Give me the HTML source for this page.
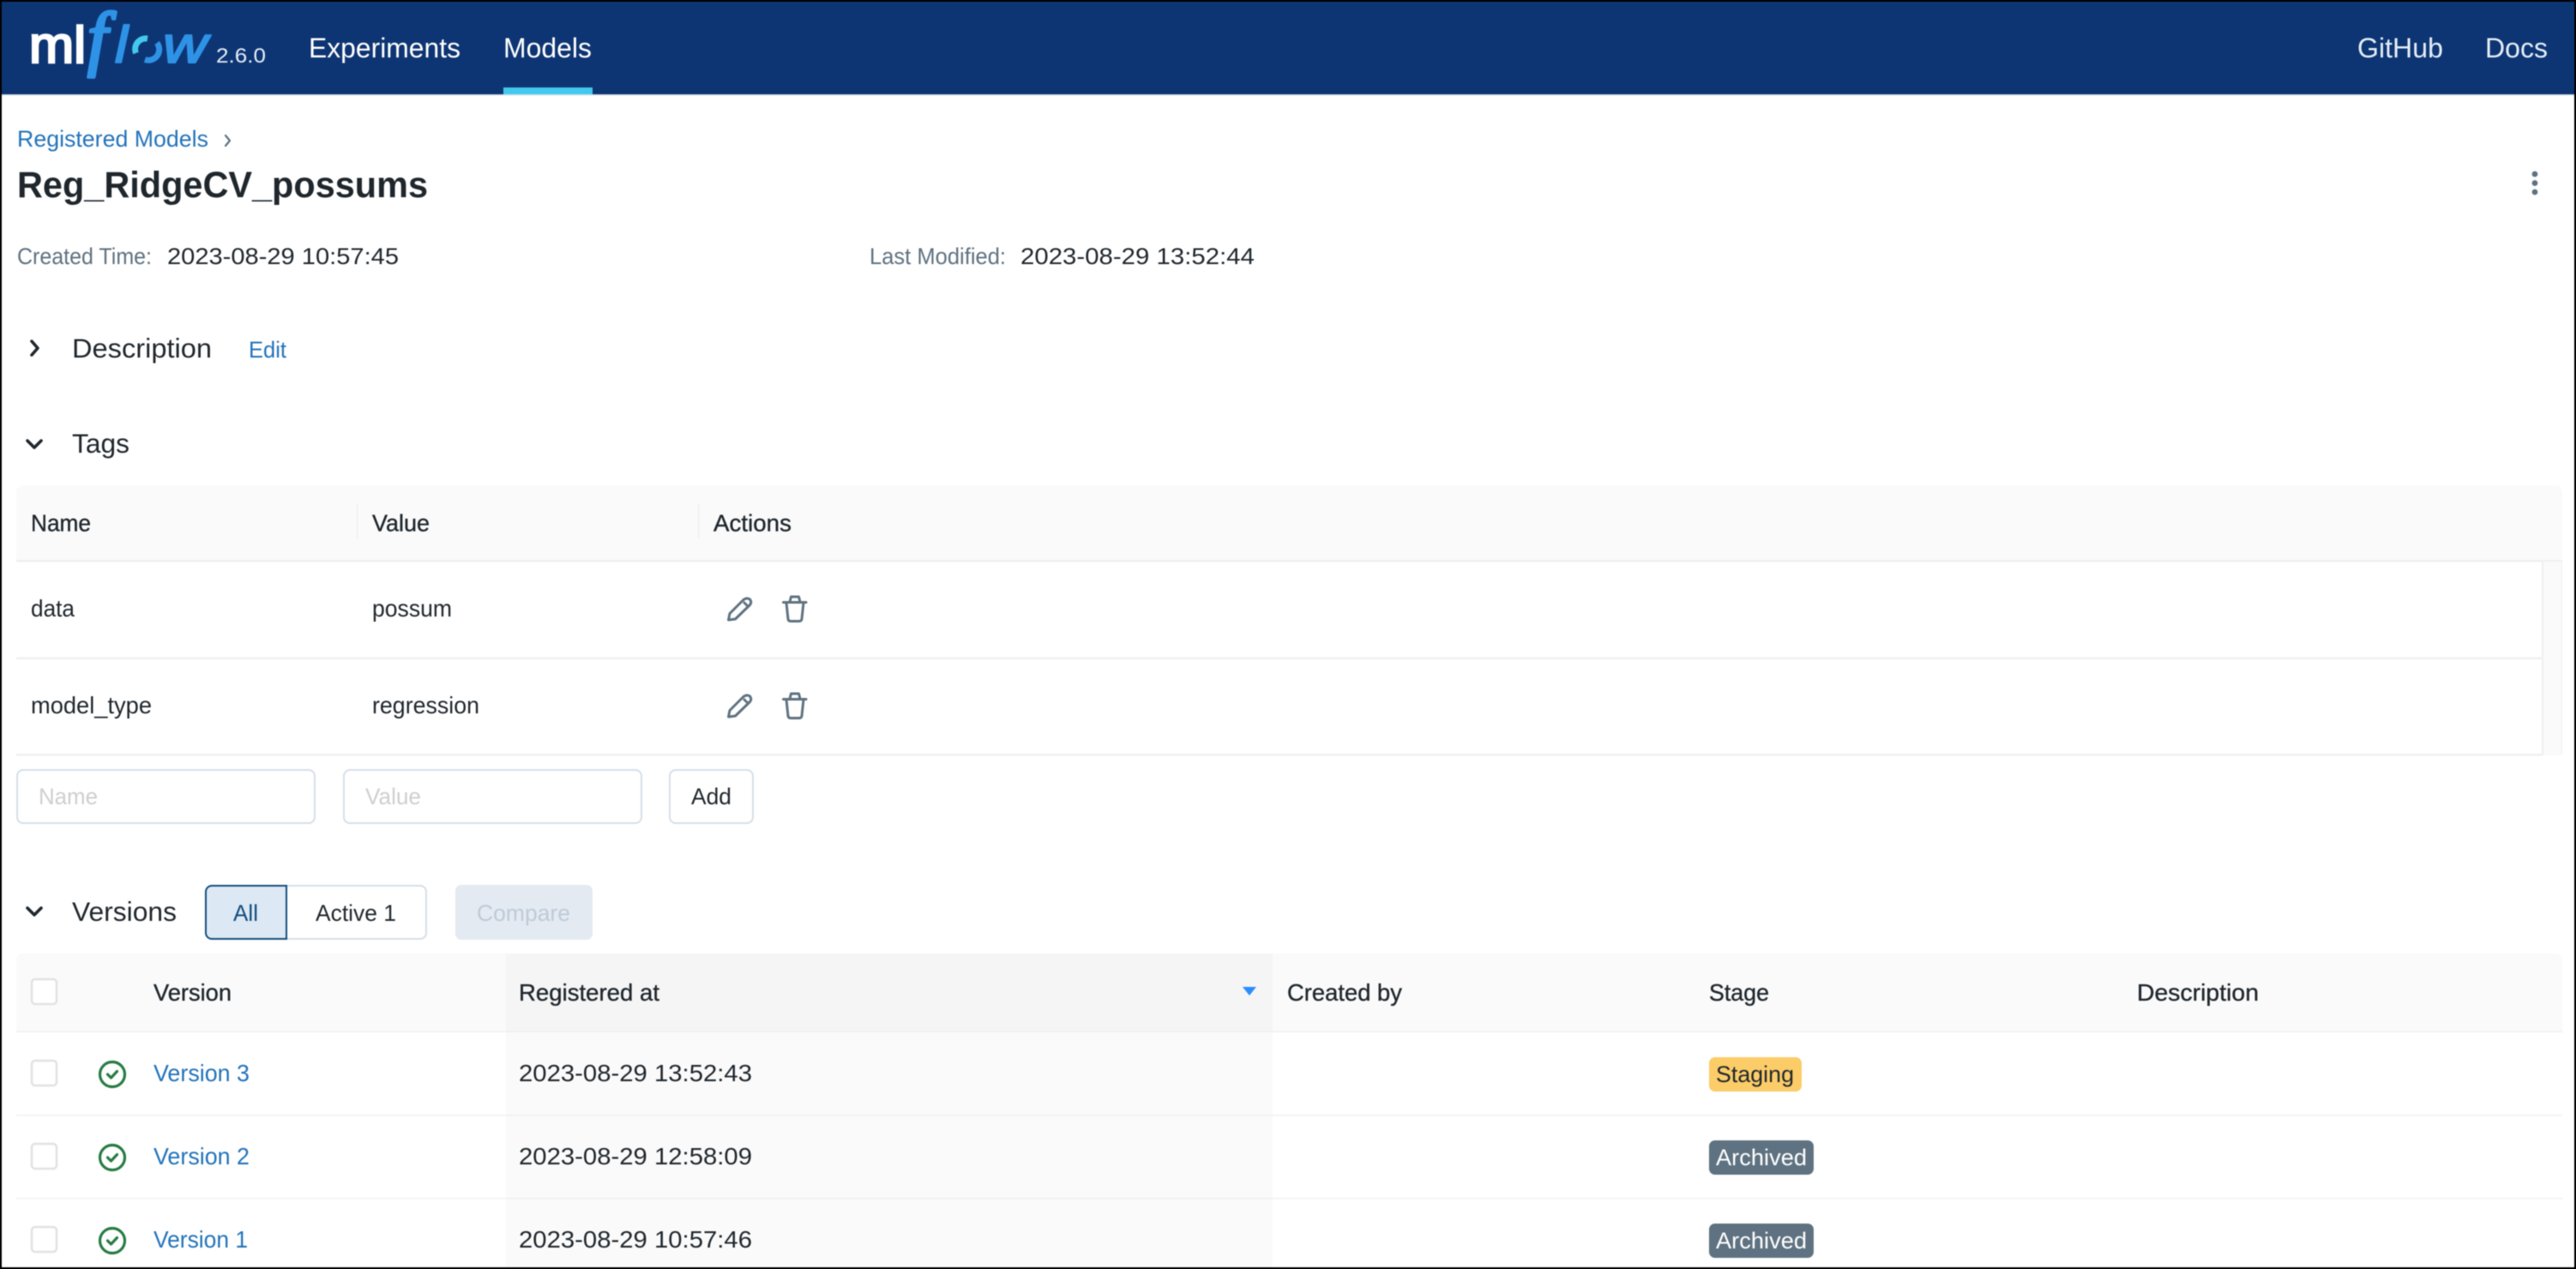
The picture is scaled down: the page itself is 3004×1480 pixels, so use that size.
<!DOCTYPE html>
<html lang="en">
<head>
<meta charset="utf-8">
<title>Reg_RidgeCV_possums - MLflow Model</title>
<style>
html,body{margin:0;padding:0;background:#000;width:3004px;height:1480px;overflow:hidden}
svg{display:block;filter:blur(.6px)}
text{font-family:"Liberation Sans",Arial,sans-serif;font-size:28px;fill:#1F272D}
.nav{font-size:32px;fill:#fff}
.navr{font-size:32px;fill:#E4EDF7}
.small{font-size:26.5px}
.gray{fill:#5F7281}
.link{fill:#2374BB}
.h{font-size:31.5px}
.th{font-size:27.5px;stroke:#1F272D;stroke-width:.35px}
.ph{fill:#CFCFCF;font-size:27px}
.ic{fill:none;stroke:#5F7281;stroke-width:3;stroke-linecap:round;stroke-linejoin:round}
.chev{fill:none;stroke:#1F272D;stroke-width:3.6;stroke-linecap:round;stroke-linejoin:round}
.cb{fill:#fff;stroke:#E2E2E2;stroke-width:2.5}
.ok{fill:none;stroke:#277C43;stroke-width:3.2;stroke-linecap:round;stroke-linejoin:round}
.logo-b{font-style:italic;fill:#2E93E6;stroke:#2E93E6;stroke-linejoin:round}
</style>
</head>
<body>
<svg xmlns="http://www.w3.org/2000/svg" width="3004" height="1480" viewBox="0 0 3004 1480">
  <!-- page -->
  <rect x="2" y="2" width="3000" height="1476" fill="#fff"/>

  <!-- header -->
  <rect x="2" y="2" width="3000" height="108" fill="#0E3573"/>
  <rect x="2" y="110" width="3000" height="1.5" fill="#D9E2EC"/>
  <text x="34" y="73" style="font-size:60px;fill:#fff;stroke:#fff;stroke-width:2.6" textLength="66" lengthAdjust="spacingAndGlyphs">ml</text>
  <text class="logo-b" x="102" y="72" style="font-family:'Liberation Serif',serif;font-size:84px;stroke-width:3.6">f</text>
  <text class="logo-b" x="134" y="73" style="font-size:60px;stroke-width:2" textLength="15" lengthAdjust="spacingAndGlyphs">l</text>
  <g fill="none" stroke-width="7">
    <path d="M158.5 62 A12.5 12.5 0 0 1 172 45" stroke="#43C9ED"/>
    <path d="M183 50 A12.5 12.5 0 0 1 169 69.5" stroke="#2E93E6"/>
  </g>
  <text class="logo-b" x="190" y="73" style="font-size:60px;stroke-width:2" textLength="52" lengthAdjust="spacingAndGlyphs">w</text>
  <text x="252" y="73" style="font-size:24.5px;fill:#E4EDF7" textLength="58" lengthAdjust="spacingAndGlyphs">2.6.0</text>
  <text class="nav" x="360" y="67" textLength="177" lengthAdjust="spacingAndGlyphs">Experiments</text>
  <text class="nav" x="587" y="67" textLength="103" lengthAdjust="spacingAndGlyphs">Models</text>
  <rect x="587" y="102" width="104" height="8" fill="#43C9ED"/>
  <text class="navr" x="2749" y="67" textLength="100" lengthAdjust="spacingAndGlyphs">GitHub</text>
  <text class="navr" x="2898" y="67" textLength="73" lengthAdjust="spacingAndGlyphs">Docs</text>

  <!-- breadcrumb + title -->
  <text class="small link" x="20" y="171" textLength="223" lengthAdjust="spacingAndGlyphs">Registered Models</text>
  <path d="M263 158 L268 164 L263 170" fill="none" stroke="#5F7281" stroke-width="2.2" stroke-linecap="round" stroke-linejoin="round"/>
  <text x="20" y="230" style="font-size:43px;font-weight:bold" textLength="479" lengthAdjust="spacingAndGlyphs">Reg_RidgeCV_possums</text>
  <circle cx="2956" cy="203" r="3.4" fill="#5F7281"/>
  <circle cx="2956" cy="213.5" r="3.4" fill="#5F7281"/>
  <circle cx="2956" cy="224" r="3.4" fill="#5F7281"/>

  <text class="small gray" x="20" y="308" textLength="157" lengthAdjust="spacingAndGlyphs">Created Time:</text>
  <text class="small" x="195" y="308" textLength="270" lengthAdjust="spacingAndGlyphs">2023-08-29 10:57:45</text>
  <text class="small gray" x="1014" y="308" textLength="159" lengthAdjust="spacingAndGlyphs">Last Modified:</text>
  <text class="small" x="1190" y="308" textLength="273" lengthAdjust="spacingAndGlyphs">2023-08-29 13:52:44</text>

  <!-- description -->
  <path class="chev" d="M37 398 L44 406 L37 414"/>
  <text class="h" x="84" y="417" textLength="163" lengthAdjust="spacingAndGlyphs">Description</text>
  <text class="small link" x="290" y="417" textLength="44" lengthAdjust="spacingAndGlyphs">Edit</text>

  <!-- tags -->
  <path class="chev" d="M32 514 L40 522 L48 514"/>
  <text class="h" x="84" y="528" textLength="67" lengthAdjust="spacingAndGlyphs">Tags</text>

  <path d="M27 566 H2980 a8 8 0 0 1 8 8 V653 H19 V574 a8 8 0 0 1 8 -8 Z" fill="#FAFAFA"/>
  <rect x="19" y="653" width="2969" height="2.5" fill="#F0F0F0"/>
  <rect x="416" y="588" width="1.5" height="40" fill="#F0F0F0"/>
  <rect x="814" y="588" width="1.5" height="40" fill="#F0F0F0"/>
  <text class="th" x="36" y="619.5" textLength="70" lengthAdjust="spacingAndGlyphs">Name</text>
  <text class="th" x="434" y="619.5" textLength="67" lengthAdjust="spacingAndGlyphs">Value</text>
  <text class="th" x="832" y="619.5" textLength="91" lengthAdjust="spacingAndGlyphs">Actions</text>

  <rect x="2965" y="655" width="23" height="226" fill="#FAFAFA"/>
  <rect x="2964" y="655" width="1.8" height="226" fill="#EFEFEF"/>
  <rect x="2987" y="655" width="1" height="226" fill="#F2F2F2"/>
  <rect x="19" y="766.5" width="2946" height="2.5" fill="#F0F0F0"/>
  <rect x="19" y="879" width="2946" height="2.5" fill="#F0F0F0"/>

  <text x="36" y="719" textLength="51" lengthAdjust="spacingAndGlyphs">data</text>
  <text x="434" y="719" textLength="93" lengthAdjust="spacingAndGlyphs">possum</text>
  <text x="36" y="832" textLength="141" lengthAdjust="spacingAndGlyphs">model_type</text>
  <text x="434" y="832" textLength="125" lengthAdjust="spacingAndGlyphs">regression</text>

  <!-- row icons -->
  <g>
    <path class="ic" d="M849.5 723 L851 715.5 L867 699.5 Q871 696.5 874.5 699 Q877 702.5 874.5 705.5 L857.5 722 Z"/>
    <path class="ic" d="M868 703 L871.5 706.5" stroke-width="2.2"/>
    <path class="ic" d="M913.5 702.5 H940 M917 703 L919 722 Q919.4 724.5 922 724.5 H932 Q934.5 724.5 935 722 L937 703 M921 702 L922.5 696 H931.5 L933 702"/>
  </g>
  <g transform="translate(0,113)">
    <path class="ic" d="M849.5 723 L851 715.5 L867 699.5 Q871 696.5 874.5 699 Q877 702.5 874.5 705.5 L857.5 722 Z"/>
    <path class="ic" d="M868 703 L871.5 706.5" stroke-width="2.2"/>
    <path class="ic" d="M913.5 702.5 H940 M917 703 L919 722 Q919.4 724.5 922 724.5 H932 Q934.5 724.5 935 722 L937 703 M921 702 L922.5 696 H931.5 L933 702"/>
  </g>

  <!-- add tag form -->
  <rect x="20" y="898" width="347" height="62" rx="7" fill="#fff" stroke="#D5DFE8" stroke-width="2"/>
  <rect x="401" y="898" width="347" height="62" rx="7" fill="#fff" stroke="#D5DFE8" stroke-width="2"/>
  <rect x="781" y="898" width="97" height="62" rx="7" fill="#fff" stroke="#D5DFE8" stroke-width="2"/>
  <text class="ph" x="45" y="938" textLength="69" lengthAdjust="spacingAndGlyphs">Name</text>
  <text class="ph" x="426" y="938" textLength="65" lengthAdjust="spacingAndGlyphs">Value</text>
  <text class="small" x="806" y="938" textLength="47" lengthAdjust="spacingAndGlyphs">Add</text>

  <!-- versions -->
  <path class="chev" d="M32 1059 L40 1067 L48 1059"/>
  <text class="h" x="84" y="1074" textLength="122" lengthAdjust="spacingAndGlyphs">Versions</text>
  <path d="M334 1033 H490 a7 7 0 0 1 7 7 V1088 a7 7 0 0 1 -7 7 H334 Z" fill="#fff" stroke="#D5DFE8" stroke-width="2"/>
  <path d="M334 1033 H247 a7 7 0 0 0 -7 7 V1088 a7 7 0 0 0 7 7 H334 Z" fill="#DCE8F3" stroke="#124D7F" stroke-width="2"/>
  <text class="small" x="272" y="1074" style="fill:#124D7F" textLength="29" lengthAdjust="spacingAndGlyphs">All</text>
  <text class="small" x="368" y="1074" textLength="94" lengthAdjust="spacingAndGlyphs">Active 1</text>
  <rect x="531" y="1032" width="160" height="64" rx="7" fill="#E4EAF1"/>
  <text class="small" x="556" y="1074" style="fill:#BECBD7" textLength="109" lengthAdjust="spacingAndGlyphs">Compare</text>

  <path d="M27 1112 H2980 a8 8 0 0 1 8 8 V1203 H19 V1120 a8 8 0 0 1 8 -8 Z" fill="#FAFAFA"/>
  <rect x="590" y="1112" width="894" height="91" fill="#F5F5F5"/>
  <rect x="590" y="1203" width="894" height="275" fill="#FAFAFA"/>
  <rect x="19" y="1202.5" width="2969" height="1.5" fill="#F0F0F0"/>
  <rect x="19" y="1300" width="2969" height="1.5" fill="#F0F0F0"/>
  <rect x="19" y="1397" width="2969" height="1.5" fill="#F0F0F0"/>

  <rect class="cb" x="37" y="1142" width="29" height="29" rx="4"/>
  <text class="th" x="179" y="1167" textLength="91" lengthAdjust="spacingAndGlyphs">Version</text>
  <text class="th" x="605" y="1167" textLength="164" lengthAdjust="spacingAndGlyphs">Registered at</text>
  <path d="M1449 1151 H1465 L1457 1161 Z" fill="#2A8CFF"/>
  <text class="th" x="1501" y="1167" textLength="134" lengthAdjust="spacingAndGlyphs">Created by</text>
  <text class="th" x="1993" y="1167" textLength="70" lengthAdjust="spacingAndGlyphs">Stage</text>
  <text class="th" x="2492" y="1167" textLength="142" lengthAdjust="spacingAndGlyphs">Description</text>

  <!-- version rows -->
  <rect class="cb" x="37" y="1237" width="29" height="29" rx="4"/>
  <circle class="ok" cx="131" cy="1253" r="14.5"/>
  <path class="ok" d="M125.5 1253 L129.5 1257 L136.5 1249.5"/>
  <text class="link" x="179" y="1261" textLength="112" lengthAdjust="spacingAndGlyphs">Version 3</text>
  <text x="605" y="1261" textLength="272" lengthAdjust="spacingAndGlyphs">2023-08-29 13:52:43</text>
  <rect x="1993" y="1233" width="108" height="40" rx="7" fill="#FBCC68"/>
  <text class="small" x="2001" y="1262" textLength="91" lengthAdjust="spacingAndGlyphs">Staging</text>

  <rect class="cb" x="37" y="1334" width="29" height="29" rx="4"/>
  <circle class="ok" cx="131" cy="1350" r="14.5"/>
  <path class="ok" d="M125.5 1350 L129.5 1354 L136.5 1346.5"/>
  <text class="link" x="179" y="1358" textLength="112" lengthAdjust="spacingAndGlyphs">Version 2</text>
  <text x="605" y="1358" textLength="272" lengthAdjust="spacingAndGlyphs">2023-08-29 12:58:09</text>
  <rect x="1993" y="1330" width="122" height="40" rx="7" fill="#5F7281"/>
  <text class="small" x="2001" y="1359" style="fill:#fff" textLength="106" lengthAdjust="spacingAndGlyphs">Archived</text>

  <rect class="cb" x="37" y="1431" width="29" height="29" rx="4"/>
  <circle class="ok" cx="131" cy="1447" r="14.5"/>
  <path class="ok" d="M125.5 1447 L129.5 1451 L136.5 1443.5"/>
  <text class="link" x="179" y="1455" textLength="110" lengthAdjust="spacingAndGlyphs">Version 1</text>
  <text x="605" y="1455" textLength="272" lengthAdjust="spacingAndGlyphs">2023-08-29 10:57:46</text>
  <rect x="1993" y="1427" width="122" height="40" rx="7" fill="#5F7281"/>
  <text class="small" x="2001" y="1456" style="fill:#fff" textLength="106" lengthAdjust="spacingAndGlyphs">Archived</text>
</svg>
</body>
</html>
